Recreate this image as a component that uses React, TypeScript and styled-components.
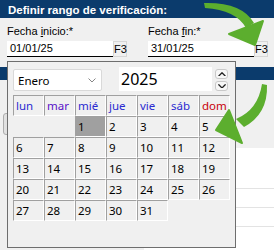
import React from 'react';
import styled, { createGlobalStyle } from 'styled-components';

const Global = createGlobalStyle`
  html, body { margin: 0; padding: 0; }
  body {
    background: #f0f0f0;
    width: 274px;
    height: 250px;
    overflow: hidden;
    font-family: "Liberation Sans", Arial, sans-serif;
  }
`;

const Page = styled.div`
  position: relative;
  width: 274px;
  height: 250px;
  overflow: hidden;
  background: #f0f0f0;
`;

const TitleBar = styled.div`
  height: 18px;
  background: #0b3b6c;
  color: #fff;
  font: bold 11.5px/20px "Liberation Sans", Arial, sans-serif;
  padding-left: 8px;
  white-space: nowrap;
  overflow: hidden;
`;

const FieldsRow = styled.div`
  display: flex;
  gap: 21px;
  padding: 6px 0 0 7px;
`;

const Field = styled.div`
  display: flex;
  flex-direction: column;
  gap: 3px;
`;

const Label = styled.label`
  font: 11px/14px "Liberation Sans", Arial, sans-serif;
  color: #000;
`;

const AccessKey = styled.span`
  text-decoration: underline;
`;

const InputRow = styled.div`
  display: flex;
  align-items: flex-start;
`;

const DateInput = styled.div`
  width: 106px;
  height: 16px;
  box-sizing: border-box;
  background: #fff;
  border-bottom: 1px solid #000;
  font: 11px/15px "Liberation Sans", Arial, sans-serif;
  padding-left: 3px;
  color: #000;
`;

const KeyHint = styled.div`
  width: 14px;
  height: 16px;
  box-sizing: border-box;
  border: 1px solid #d6d6d6;
  font: 11px/14px "Liberation Sans", Arial, sans-serif;
  text-align: center;
  color: #000;
`;

const SectionBar = styled.div`
  margin-top: 10px;
  height: 13px;
  background: #0b3b6c;
`;

const Lower = styled.div`
  display: flex;
  justify-content: space-between;
`;

const GhostButton = styled.div`
  margin: 33px 0 0 3px;
  width: 30px;
  height: 22px;
  box-sizing: border-box;
  border: 1px solid #adadad;
  border-radius: 3px;
  background: #e1e1e1;
`;

const WhiteTable = styled.div`
  margin-top: 68px;
  width: 130px;
  height: 110px;
  background: #fff;
`;

const TableHead = styled.div`
  height: 40px;
`;

const TableRow = styled.div`
  height: 18px;
  border-top: 1px solid #e3e3e3;
`;

const Popup = styled.div`
  position: absolute;
  left: 7px;
  top: 61px;
  width: 229px;
  height: 187px;
  box-sizing: border-box;
  border: 1px solid #6e6e6e;
  background: #f0f0f0;
  padding: 7px 0 0 5px;
  z-index: 2;
`;

const Controls = styled.div`
  display: flex;
  align-items: flex-start;
  height: 22px;
`;

const MonthSelect = styled.div`
  width: 89px;
  height: 22px;
  box-sizing: border-box;
  border: 1px solid #d9d9d9;
  border-radius: 2px;
  background: #fff;
  display: flex;
  align-items: center;
  justify-content: space-between;
  padding: 0 5px 0 4px;
  font: 11.5px "Noto Sans", "Open Sans", sans-serif;
  color: #000;
`;

const YearBox = styled.div`
  margin: -2px 0 0 17px;
  width: 93px;
  height: 24px;
  box-sizing: border-box;
  background: #fff;
  font: 16px/24px "Noto Sans", "Open Sans", sans-serif;
  padding-left: 2px;
  color: #000;
`;

const Spinner = styled.div`
  margin-left: 3px;
  display: flex;
  flex-direction: column;
  gap: 2px;
`;

const SpinButton = styled.div`
  width: 13px;
  height: 10px;
  box-sizing: border-box;
  border: 1px solid #c9c9c9;
  border-radius: 3px;
  background: #f7f7f7;
  display: flex;
  align-items: center;
  justify-content: center;
`;

const Grid = styled.div`
  margin-top: 4px;
  display: grid;
  grid-template-columns: repeat(7, 31px);
  grid-auto-rows: 21px;
`;

const Cell = styled.div<{ $empty?: boolean; $selected?: boolean; $color?: string }>`
  box-sizing: border-box;
  border-top: 1px solid ${(p) => (p.$empty ? 'transparent' : '#a0a0a0')};
  border-left: 1px solid ${(p) => (p.$empty ? 'transparent' : '#a0a0a0')};
  border-right: 1px solid ${(p) => (p.$empty ? 'transparent' : '#ffffff')};
  border-bottom: 1px solid ${(p) => (p.$empty ? 'transparent' : '#ffffff')};
  background: ${(p) => (p.$selected ? '#a0a0a0' : 'transparent')};
  color: ${(p) => p.$color || '#000'};
  font: 11.5px/19px "Noto Sans", "Open Sans", sans-serif;
  padding-left: 2px;
`;

const Overlay = styled.svg`
  position: absolute;
  left: 0;
  top: 0;
  z-index: 3;
  pointer-events: none;
`;

const heads = [
  { t: 'lun', c: '#2a2ad0' },
  { t: 'mar', c: '#5a10c8' },
  { t: 'mié', c: '#2a2ad0' },
  { t: 'jue', c: '#2a2ad0' },
  { t: 'vie', c: '#2a2ad0' },
  { t: 'sáb', c: '#2a2ad0' },
  { t: 'dom', c: '#c8000a' },
];

const days: (number | null)[] = [
  null, null,
  ...Array.from({ length: 31 }, (_, i) => i + 1),
  null, null, null, null,
];

const Chevron = ({ up, size = 9, stroke = '#222', w = 1.6 }: { up?: boolean; size?: number; stroke?: string; w?: number }) => (
  <svg width={size} height={size * 0.6} viewBox="0 0 10 6">
    <path d={up ? 'M1 5 L5 1 L9 5' : 'M1 1 L5 5 L9 1'} fill="none" stroke={stroke} strokeWidth={w} strokeLinecap="round" strokeLinejoin="round" />
  </svg>
);

export default function App() {
  return (
    <Page>
      <Global />
      <TitleBar>Definir rango de verificación:</TitleBar>
      <FieldsRow>
        <Field>
          <Label>
            Fecha <AccessKey>i</AccessKey>nicio:*
          </Label>
          <InputRow>
            <DateInput>01/01/25</DateInput>
            <KeyHint>F3</KeyHint>
          </InputRow>
        </Field>
        <Field>
          <Label>
            Fecha <AccessKey>f</AccessKey>in:*
          </Label>
          <InputRow>
            <DateInput>31/01/25</DateInput>
            <KeyHint>F3</KeyHint>
          </InputRow>
        </Field>
      </FieldsRow>
      <SectionBar />
      <Lower>
        <GhostButton />
        <WhiteTable>
          <TableHead />
          <TableRow />
          <TableRow />
          <TableRow />
        </WhiteTable>
      </Lower>

      <Popup>
        <Controls>
          <MonthSelect>
            <span>Enero</span>
            <Chevron size={8} stroke="#666" w={1} />
          </MonthSelect>
          <YearBox>2025</YearBox>
          <Spinner>
            <SpinButton>
              <Chevron up size={8} />
            </SpinButton>
            <SpinButton>
              <Chevron size={8} />
            </SpinButton>
          </Spinner>
        </Controls>
        <Grid>
          {heads.map((h) => (
            <Cell key={h.t} $color={h.c}>
              {h.t}
            </Cell>
          ))}
          {days.map((d, i) =>
            d === null ? (
              <Cell key={'e' + i} $empty />
            ) : (
              <Cell key={d} $selected={d === 1}>
                {d}
              </Cell>
            )
          )}
        </Grid>
      </Popup>

      <Overlay width={274} height={250} viewBox="0 0 274 250">
        <path d="M204 3 Q242 2 254 23 L246 28 Q236 10 205 8 Z" fill="#5cae2e" />
        <polygon points="229,34 263,21 255,45" fill="#5cae2e" strokeLinejoin="round" stroke="#5cae2e" strokeWidth="2" />
        <path d="M262 84 L267 85 Q268 114 244 127 L236 119 Q258 110 262 84 Z" fill="#5cae2e" />
        <polygon points="229,110 242,143 216,130" fill="#5cae2e" strokeLinejoin="round" stroke="#5cae2e" strokeWidth="2" />
      </Overlay>
    </Page>
  );
}
